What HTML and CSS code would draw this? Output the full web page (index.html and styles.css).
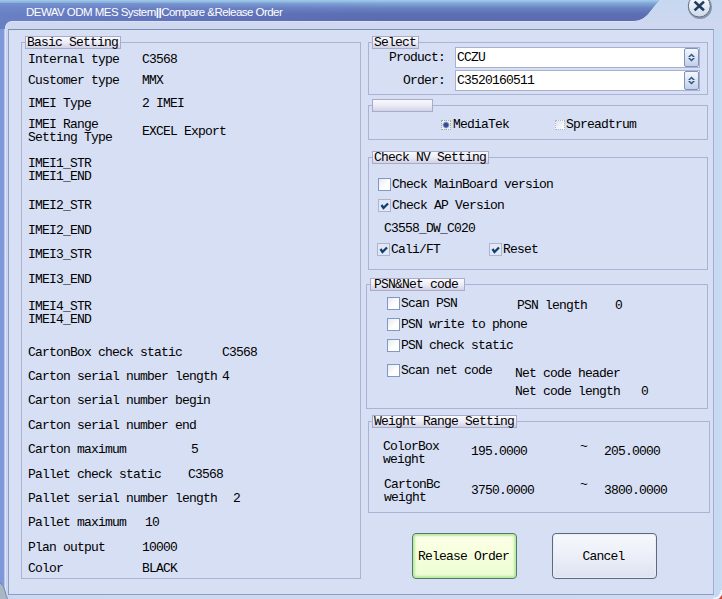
FILE: index.html
```html
<!DOCTYPE html>
<html lang="en">
<head>
<meta charset="utf-8">
<title>DEWAV ODM MES System</title>
<link rel="stylesheet" href="styles.css">
</head>
<body>
<div class="window">
  <header class="titlebar">
    <svg class="title-art" width="722" height="29" viewBox="0 0 722 29" aria-hidden="true">
      <defs>
        <linearGradient id="bar" x1="0" y1="0" x2="0" y2="1">
          <stop offset="0" stop-color="#a3cbe8"/><stop offset=".12" stop-color="#7fa6d8"/><stop offset=".28" stop-color="#6a82c2"/><stop offset=".5" stop-color="#5b6db3"/><stop offset="1" stop-color="#5b69ae"/>
        </linearGradient>
        <linearGradient id="shine" x1="0" y1="0" x2="1" y2="0">
          <stop offset="0" stop-color="#7088cc" stop-opacity=".7"/><stop offset=".6" stop-color="#6a7cc4" stop-opacity=".3"/><stop offset="1" stop-color="#6472b6" stop-opacity="0"/>
        </linearGradient>
        <linearGradient id="ring" x1="0" y1="0" x2="0" y2="1">
          <stop offset="0" stop-color="#fff"/><stop offset="1" stop-color="#cbd9ea"/>
        </linearGradient>
      </defs>
      <path d="M0 0H661C651 8 648 21 634 21.500H12Q5 21.500 5 29H0Z" fill="url(#bar)"/>
      <path d="M0 3H400V21.500H12Q5 21.500 5 29H0Z" fill="url(#shine)"/>
      <path d="M661 0C651 8 648 21 634 21.500H12Q5.500 21.500 5.500 29" fill="none" stroke="#d9e1f5" stroke-width="1"/>
      <circle cx="700" cy="7" r="12" fill="#8995ab"/>
      <circle cx="699.300" cy="6" r="11" fill="url(#ring)" stroke="#65738a" stroke-width="1"/>
      <path d="M695.500 2.500L703 9.500M703 2.500L695.500 9.500" stroke="#1f3d63" stroke-width="2.600" stroke-linecap="square"/>
    </svg>
    <span class="title">DEWAV ODM MES System<b>||</b>Compare &amp;Release Order</span>
  </header>
  <main class="panel">
    <section class="group basic">
      <h2 class="legend">Basic Setting</h2>
      <div class="settings">
        <div class="row"><span>Internal type</span><span>C3568</span></div>
        <div class="row"><span>Customer type</span><span>MMX</span></div>
        <div class="row"><span>IMEI Type</span><span>2 IMEI</span></div>
        <div class="row middle"><span>IMEI Range<br>Setting Type</span><span>EXCEL Export</span></div>
        <div class="row"><span>IMEI1_STR<br>IMEI1_END</span></div>
        <div class="row"><span>IMEI2_STR</span></div>
        <div class="row"><span>IMEI2_END</span></div>
        <div class="row"><span>IMEI3_STR</span></div>
        <div class="row"><span>IMEI3_END</span></div>
        <div class="row"><span>IMEI4_STR<br>IMEI4_END</span></div>
        <div class="row box-static"><span>CartonBox check static</span><span>C3568</span></div>
        <div class="row box-static"><span>Carton serial number length</span><span>4</span></div>
        <div class="row"><span>Carton serial number begin</span></div>
        <div class="row"><span>Carton serial number end</span></div>
        <div class="row carton-max"><span>Carton maximum</span><span>5</span></div>
        <div class="row pallet-static"><span>Pallet check static</span><span>C3568</span></div>
        <div class="row pallet-length"><span>Pallet serial number length</span><span>2</span></div>
        <div class="row pallet-max"><span>Pallet maximum</span><span>10</span></div>
        <div class="row"><span>Plan output</span><span>10000</span></div>
        <div class="row"><span>Color</span><span>BLACK</span></div>
      </div>
    </section>
    <div class="side">
      <section class="group select">
        <h2 class="legend">Select</h2>
        <div class="combos">
          <div class="field"><span class="name">Product:</span><div class="combo"><span>CCZU</span><i class="spin"><svg width="7" height="9" viewBox="0 0 7 9"><path d="M0 4L3.500 .5L7 4H5L3.500 2.500L2 4ZM0 5L3.500 8.500L7 5H5L3.500 6.500L2 5Z" fill="#2c527d"/></svg></i></div></div>
          <div class="field"><span class="name">Order:</span><div class="combo"><span>C3520160511</span><i class="spin"><svg width="7" height="9" viewBox="0 0 7 9"><path d="M0 4L3.500 .5L7 4H5L3.500 2.500L2 4ZM0 5L3.500 8.500L7 5H5L3.500 6.500L2 5Z" fill="#2c527d"/></svg></i></div></div>
        </div>
      </section>
      <section class="group chip">
        <h2 class="legend blank"></h2>
        <div class="radios">
          <span class="option"><i class="radio on"></i>MediaTek</span>
          <span class="option"><i class="radio"></i>Spreadtrum</span>
        </div>
      </section>
      <section class="group nv">
        <h2 class="legend">Check NV Setting</h2>
        <div class="nv-rows">
          <span class="option"><i class="check"></i>Check MainBoard version</span>
          <span class="option"><i class="check on"><svg width="9" height="8" viewBox="0 0 9 8"><path d="M1.500 3L3.500 6L8 1.500" fill="none" stroke="#10406f" stroke-width="2.300"/></svg></i>Check AP Version</span>
          <span class="version">C3558_DW_C020</span>
          <div class="pair">
            <span class="option"><i class="check on"><svg width="9" height="8" viewBox="0 0 9 8"><path d="M1.500 3L3.500 6L8 1.500" fill="none" stroke="#10406f" stroke-width="2.300"/></svg></i>Cali/FT</span>
            <span class="option"><i class="check on"><svg width="9" height="8" viewBox="0 0 9 8"><path d="M1.500 3L3.500 6L8 1.500" fill="none" stroke="#10406f" stroke-width="2.300"/></svg></i>Reset</span>
          </div>
        </div>
      </section>
      <section class="group psn">
        <h2 class="legend">PSN&amp;Net code</h2>
        <div class="psn-cols">
          <div class="psn-checks">
            <span class="option"><i class="check"></i>Scan PSN</span>
            <span class="option"><i class="check"></i>PSN write to phone</span>
            <span class="option"><i class="check"></i>PSN check static</span>
            <span class="option"><i class="check"></i>Scan net code</span>
          </div>
          <div class="psn-info">
            <div class="psn-length"><span>PSN length</span><span>0</span></div>
            <div>Net code header</div>
            <div class="net-length"><span>Net code length</span><span>0</span></div>
          </div>
        </div>
      </section>
      <section class="group weight">
        <h2 class="legend">Weight Range Setting</h2>
        <div class="weights">
          <div class="range"><span class="name">ColorBox<br>weight</span><span class="num">195.0000</span><span class="tilde">~</span><span class="num">205.0000</span></div>
          <div class="range carton"><span class="name">CartonBc<br>weight</span><span class="num">3750.0000</span><span class="tilde">~</span><span class="num">3800.0000</span></div>
        </div>
      </section>
      <div class="actions">
        <button class="btn primary">Release Order</button>
        <button class="btn">Cancel</button>
      </div>
    </div>
  </main>
  <svg class="corner left" width="8" height="18" viewBox="0 0 8 18" aria-hidden="true"><path d="M0 2Q4 4 5 10Q6 16 8 18H0Z" fill="#a9b6c4"/><path d="M0 2Q4 4 5 10Q6 16 8 18" fill="none" stroke="#7186b8"/></svg>
  <svg class="corner right" width="9" height="9" viewBox="0 0 9 9" aria-hidden="true"><path d="M9 0Q8 8 0 9" fill="none" stroke="#f2f6fd" stroke-width="2"/><path d="M9 5V9H6Z" fill="#d8452c"/></svg>
</div>
</body>
</html>
```
FILE: styles.css
```css
* { box-sizing: border-box; }
body {
  margin: 0;
  width: 722px;
  height: 599px;
  overflow: hidden;
  font: 13px/13px "Liberation Mono", monospace;
  letter-spacing: -0.8px;
  color: #000;
}
.window {
  position: relative;
  height: 599px;
  background: linear-gradient(90deg, #7b98d8 0, #8299d8 4px, #eef3fc 5px, #c9d5ef 6px, #ccd8f1 8px, #d0d9f1 713px, #c5d9f2 716px, #c9daf3 100%);
}
.titlebar {
  position: relative;
  height: 29px;
  background: linear-gradient(#c5d8f0, #d0d8f0);
}
.title-art { position: absolute; left: 0; top: 0; }
.title {
  position: relative;
  display: block;
  padding: 5px 0 0 26px;
  font: 11.5px/14px "Liberation Sans", sans-serif;
  letter-spacing: -0.54px;
  color: #fff;
  white-space: nowrap;
}
.corner { position: absolute; bottom: 0; }
.corner.left { left: 0; }
.corner.right { right: 0; }
.panel {
  display: flex;
  width: 706px;
  height: 566px;
  margin-left: 8px;
  padding: 12px 0 0 12px;
  border: 1px solid #8b9fc0;
  border-top-color: #7890ad;
  border-right-color: #a2abcd;
  background: #d6dff3;
}
.group {
  border: 1px solid #abb2d2;
  white-space: nowrap;
}
.legend {
  width: max-content;
  height: 13px;
  margin: -7px 0 0 3px;
  padding: 0 2px 0 1px;
  border: 1px solid #a9abcb;
  background: linear-gradient(#fafafd, #e9eaf5 55%, #d2d1e5);
  font: inherit;
  line-height: 11px;
}
.legend.blank { width: 61px; }
.psn .legend { padding: 0 6px 0 3px; }
.basic { width: 340px; height: 537px; }
.settings {
  display: grid;
  grid-template-rows: 21px 23px 21px 39px 42px 25px 24px 25px 27px 46px 24px 24px 25px 24px 25px 24px 24px 25px 21px 13px;
  margin: 4px 0 0 6px;
}
.row { display: flex; height: 13px; }
.row.middle { height: 26px; align-items: center; }
.row span:first-child { width: 114px; flex: none; }
.row.box-static span:first-child { width: 194px; }
.row.carton-max span:first-child { width: 163px; }
.row.pallet-static span:first-child { width: 160px; }
.row.pallet-length span:first-child { width: 205px; }
.row.pallet-max span:first-child { width: 117px; }
.side { width: 344px; margin-left: 5px; }
.select, .chip, .nv, .weight { margin-left: 2px; width: 340px; }
.select { height: 53px; }
.combos { display: grid; gap: 2px; margin-top: -2px; }
.field { display: flex; align-items: center; height: 21px; }
.field .name { width: 76px; margin-right: 10px; text-align: right; }
.combo {
  display: flex;
  justify-content: space-between;
  align-items: center;
  width: 245px;
  height: 21px;
  padding-left: 1px;
  border: 1px solid #aab0cf;
  background: #fff;
}
.spin {
  display: flex;
  align-items: center;
  justify-content: center;
  width: 15px;
  height: 19px;
  border: 1px solid #7b93bd;
  border-radius: 2px;
  background: linear-gradient(#f4f7fd, #c3cee9);
}
.chip { height: 35px; margin-top: 10px; }
.radios { display: flex; margin: 6px 0 0 72px; }
.radios .option:first-child { width: 114px; }
.option { display: flex; align-items: center; height: 13px; }
.radio {
  width: 10px;
  height: 10px;
  margin-right: 2px;
  border: 1px dotted #8fb593;
  background: linear-gradient(135deg, #dce3ee, #fff);
}
.radio:not(.on) { border-color: #a9b8c2; margin-right: 1px; }
.radio.on { background: radial-gradient(circle, #344b91 0 1.800px, #8997c7 2.800px, #e9eefa 3.800px); }
.nv { height: 113px; margin-top: 17px; }
.nv-rows { display: grid; grid-template-rows: 21px 23px 21px 13px; margin: 14px 0 0 9px; }
.check {
  display: flex;
  align-items: center;
  justify-content: center;
  width: 13px;
  height: 13px;
  margin-right: 1px;
  border: 1px solid #7f99c2;
  background: linear-gradient(135deg, #e7e9f2, #fff 60%);
}
.check.on { border-color: #adb4d2; background: #e2e8f5; }
.version { margin-left: 6px; }
.pair { display: flex; margin-left: -1px; }
.pair .option:first-child { width: 112px; }
.psn { width: 342px; height: 125px; margin-top: 14px; }
.psn-cols { display: flex; margin: 6px 0 0 20px; }
.psn-checks { display: grid; grid-template-rows: 21px 21px 25px 13px; width: 127px; }
.psn-checks .option { height: 13px; }
.psn-info { display: grid; grid-template-rows: 68px 18px 13px; margin: 2px 0 0 1px; }
.psn-length { display: flex; margin-left: 2px; }
.psn-length span:first-child { width: 98px; }
.net-length { display: flex; }
.net-length span:first-child { width: 126px; }
.weight { width: 342px; height: 92px; margin-top: 12px; }
.weights { display: grid; grid-template-rows: 38px 26px; margin: 12px 0 0 14px; }
.range { display: flex; height: 26px; }
.range .name { width: 57px; margin-right: 31px; }
.range .num { padding-top: 5px; width: 109px; }
.range .tilde { width: 24px; }
.carton .name { padding-left: 1px; }
.carton .num { padding-top: 6px; }
.actions { display: flex; gap: 35px; margin: 20px 0 0 46px; }
.btn {
  width: 105px;
  height: 46px;
  padding: 0 2px 0 0;
  border: 1px solid #5c6b7c;
  border-radius: 4px;
  background: linear-gradient(#f7f8fd, #eceff8 50%, #dce2f0);
  box-shadow: inset 0 0 1px 1px #e8edf7;
  font: inherit;
  letter-spacing: inherit;
  color: #000;
}
.btn.primary {
  border-color: #577767;
  background: linear-gradient(#fdffe8, #f5ffdb 50%, #edfcd4);
  box-shadow: inset 0 0 2px 2px #b5eda0;
}
```
